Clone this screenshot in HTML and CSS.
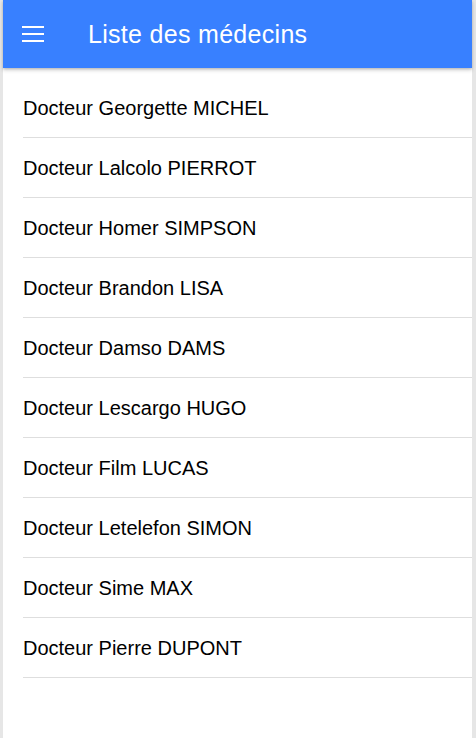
FILE: index.html
```html
<!DOCTYPE html>
<html lang="fr">
<head>
<meta charset="utf-8">
<title>Liste des médecins</title>
<link rel="stylesheet" href="styles.css">
</head>
<body>
<div class="app">
  <header class="toolbar">
    <button class="menu-btn" aria-label="menu">
      <svg width="22" height="16" viewBox="0 0 22 16"><rect x="0" y="0" width="22" height="2" fill="#fff"/><rect x="0" y="7" width="22" height="2" fill="#fff"/><rect x="0" y="14" width="22" height="2" fill="#fff"/></svg>
    </button>
    <h1 class="title">Liste des médecins</h1>
  </header>
  <ul class="list">
    <li class="item"><span class="label">Docteur Georgette MICHEL</span></li>
    <li class="item"><span class="label">Docteur Lalcolo PIERROT</span></li>
    <li class="item"><span class="label">Docteur Homer SIMPSON</span></li>
    <li class="item"><span class="label">Docteur Brandon LISA</span></li>
    <li class="item"><span class="label">Docteur Damso DAMS</span></li>
    <li class="item"><span class="label">Docteur Lescargo HUGO</span></li>
    <li class="item"><span class="label">Docteur Film LUCAS</span></li>
    <li class="item"><span class="label">Docteur Letelefon SIMON</span></li>
    <li class="item"><span class="label">Docteur Sime MAX</span></li>
    <li class="item"><span class="label">Docteur Pierre DUPONT</span></li>
  </ul>
</div>
</body>
</html>
```
FILE: styles.css
```css
html, body {
  margin: 0;
  padding: 0;
  height: 100%;
}
body {
  background: #e6e6e6;
  font-family: "Liberation Sans", Arial, sans-serif;
  overflow: hidden;
}
.app {
  margin: 0 4px 0 3px;
  height: 738px;
  background: #fff;
}
.toolbar {
  position: relative;
  z-index: 2;
  height: 68px;
  background: #3880ff;
  display: flex;
  align-items: center;
  box-shadow: 0 2px 4px rgba(0,0,0,0.2), 0 1px 2px rgba(0,0,0,0.12);
}
.menu-btn {
  background: none;
  border: 0;
  padding: 0;
  margin-left: 19px;
  width: 22px;
  height: 16px;
  display: flex;
  cursor: pointer;
}
.title {
  margin: 0 0 0 44px;
  color: #fff;
  font-size: 25px;
  font-weight: 400;
  letter-spacing: 0.3px;
}
.list {
  list-style: none;
  margin: 0;
  padding: 10px 0 0 20px;
}
.item {
  height: 59px;
  border-bottom: 1px solid #dedede;
  display: flex;
  align-items: center;
  font-size: 20px;
  color: #000;
}
.label {
  padding-top: 1px;
}
```
